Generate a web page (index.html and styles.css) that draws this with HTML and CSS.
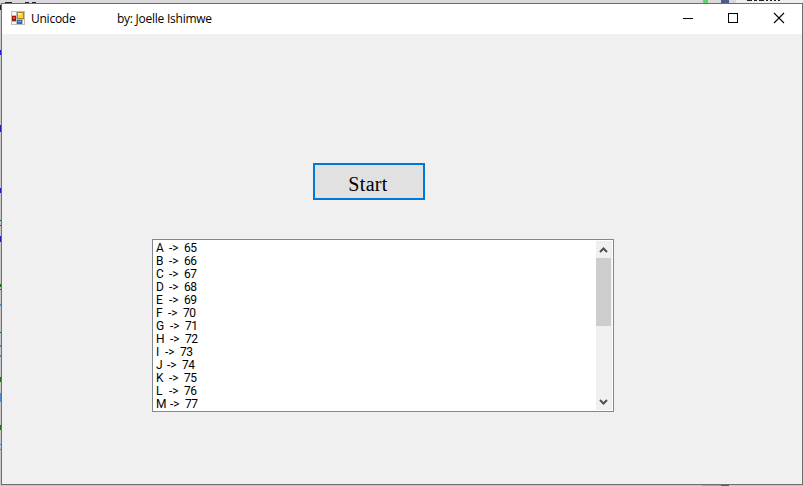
FILE: index.html
```html
<!DOCTYPE html>
<html lang="en">
<head>
<meta charset="utf-8">
<title>Unicode by: Joelle Ishimwe</title>
<link rel="stylesheet" href="styles.css">
</head>
<body>
<svg class="backdrop" width="803" height="486" shape-rendering="crispEdges" aria-hidden="true">
  <path fill="#d9d9dc" d="M0 0h803v3H0z"/>
  <path fill="#eeeef2" d="M736 0h67v3h-67z"/>
  <path fill="#222" d="M0 5h1v5H0zM5 2h7v1H5zM25 2h4v1h-4zM32 2h4v1h-4z"/>
  <path fill="#222" d="M747 0h5v1h-5zM754 0h3v1h-3zM759 0h5v1h-5zM766 0h2v1h-2zM770 0h2v1h-2zM774 0h2v1h-2zM778 0h2v1h-2z"/>
  <path fill="#5fd35f" d="M703 0h5v3h-5z"/>
  <path fill="#4c5a8c" d="M721 0h8v3h-8zM721 485h8v1h-8z"/>
  <path fill="#a9a5a5" d="M702 485h19v1h-19z"/>
  <path fill="#1c1cd8" d="M0 50h1v5H0zM0 125h1v7H0zM0 188h1v5H0zM0 236h1v6H0z"/>
  <path fill="#187018" d="M0 220h1v1H0zM0 225h1v1H0zM0 284h1v3H0zM0 289h1v1H0zM0 332h1v1H0zM0 377h1v5H0zM0 425h1v5H0z"/>
  <path fill="#4b8bd0" d="M0 304h1v2H0zM0 345h1v2H0zM0 355h1v2H0zM0 393h1v9H0zM0 444h1v1H0zM0 449h1v1H0z"/>
</svg>
<main class="window">
  <header class="titlebar">
    <svg class="app-icon" width="14" height="14" shape-rendering="crispEdges">
      <path fill="#bdbdbd" d="M0 0h14v14H0z"/>
      <path fill="#f8f8f8" d="M1 1h4v3H1zM1 11h4v2H1zM12 9h1v4h-1z"/>
      <path fill="#b98508" d="M6 1h7v7H6z"/><path fill="#ffd246" d="M7 2h5v5H7z"/><path fill="#fff0a8" d="M7 2h3v2H7z"/>
      <path fill="#9b1808" d="M1 5h4v5H1z"/><path fill="#e65335" d="M2 6h2v2H2z"/>
      <path fill="#3267bd" d="M6 9h5v4H6z"/><path fill="#80b4f5" d="M7 10h3v1H7z"/>
    </svg>
    <h1 class="title"><span class="title-name">Unicode</span><span class="title-author">by: Joelle Ishimwe</span></h1>
    <div class="controls">
      <svg width="45" height="30" shape-rendering="crispEdges"><path d="M16 14.5h10" stroke="#000"/></svg>
      <svg width="45" height="30" shape-rendering="crispEdges"><path d="M16.5 9.5h9v9h-9z" fill="none" stroke="#000"/></svg>
      <svg width="45" height="30"><path d="M17 9l10 10M27 9L17 19" stroke="#000" stroke-width="1.1"/></svg>
    </div>
  </header>
  <section class="client">
    <button class="start" type="button">Start</button>
    <div class="listbox">
      <ul class="items">
        <li><span>A</span><span class="arrow">-&gt;</span><span>65</span></li>
        <li><span>B</span><span class="arrow">-&gt;</span><span>66</span></li>
        <li><span>C</span><span class="arrow">-&gt;</span><span>67</span></li>
        <li><span>D</span><span class="arrow">-&gt;</span><span>68</span></li>
        <li><span>E</span><span class="arrow">-&gt;</span><span>69</span></li>
        <li class="narrow"><span>F</span><span class="arrow">-&gt;</span><span>70</span></li>
        <li class="wide"><span>G</span><span class="arrow">-&gt;</span><span>71</span></li>
        <li class="wide"><span>H</span><span class="arrow">-&gt;</span><span>72</span></li>
        <li class="thin"><span>I</span><span class="arrow">-&gt;</span><span>73</span></li>
        <li class="short"><span>J</span><span class="arrow">-&gt;</span><span>74</span></li>
        <li><span>K</span><span class="arrow">-&gt;</span><span>75</span></li>
        <li><span>L</span><span class="arrow">-&gt;</span><span>76</span></li>
        <li class="wide"><span>M</span><span class="arrow">-&gt;</span><span>77</span></li>
      </ul>
      <div class="scrollbar">
        <svg width="15" height="17"><path d="M4 11l3.5-3.5L11 11" fill="none" stroke="#505050" stroke-width="2"/></svg>
        <div class="thumb"></div>
        <svg class="down" width="15" height="17"><path d="M4 7l3.5 3.5L11 7" fill="none" stroke="#505050" stroke-width="2"/></svg>
      </div>
    </div>
  </section>
</main>
</body>
</html>
```
FILE: styles.css
```css
* { box-sizing: border-box; }
body {
  margin: 0;
  width: 803px;
  height: 486px;
  padding: 3px 0 0 1px;
  overflow: hidden;
  background: #c8c8c8;
}
.backdrop { position: absolute; inset: 0; }
.window {
  position: relative;
  width: 802px;
  height: 482px;
  border: 1px solid #6e6e6e;
  background: #f0f0f0;
}
.titlebar {
  display: flex;
  height: 30px;
  padding-left: 9px;
  background: #fff;
}
.app-icon { margin-top: 7px; }
.title {
  display: flex;
  margin: 0 0 0 6px;
  font: 12px/30px "Open Sans", sans-serif;
  color: #000;
  white-space: nowrap;
}
.title-name { width: 86px; letter-spacing: -0.25px; }
.title-author { letter-spacing: -0.25px; }
.controls { display: flex; margin-left: auto; }
.client {
  display: flex;
  flex-direction: column;
  align-items: flex-start;
  padding: 129px 0 0 150px;
}
.start {
  width: 112px;
  height: 37px;
  margin: 0 0 39px 161px;
  padding: 5px 0 0;
  border: 2px solid #0078d7;
  background: #e1e1e1;
  font: 20px "Palatino Linotype", "Liberation Serif", serif;
  letter-spacing: 0.3px;
  text-indent: -2px;
  color: #000;
}
.listbox {
  display: flex;
  width: 462px;
  height: 173px;
  padding: 1px;
  border: 1px solid #828790;
  background: #fff;
}
.items {
  flex: 1;
  margin: 0;
  padding: 1px 0 0 2px;
  list-style: none;
  font: 12px/13px Roboto, sans-serif;
  color: #000;
}
.items li { display: grid; grid-template-columns: 13px 15px auto; height: 13px; }
.items .narrow { grid-template-columns: 12px 15px auto; }
.items .wide { grid-template-columns: 14px 15px auto; }
.items .thin { grid-template-columns: 9px 15px auto; }
.items .short { grid-template-columns: 11px 15px auto; }
.items span { letter-spacing: -0.5px; }
.items .arrow { letter-spacing: 0; }
.scrollbar {
  display: flex;
  flex-direction: column;
  width: 16px;
  background: #f0f0f0;
}
.thumb { width: 15px; height: 68px; background: #cdcdcd; }
.down { margin-top: auto; }
```
